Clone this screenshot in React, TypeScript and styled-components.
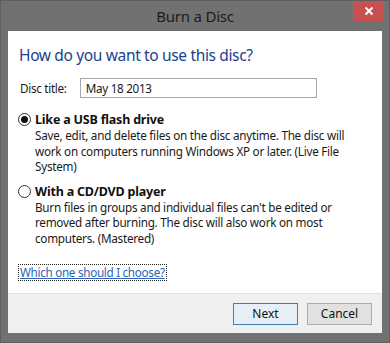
import React from "react";
import styled, { createGlobalStyle } from "styled-components";

const Global = createGlobalStyle`
  html, body { margin: 0; padding: 0; background: #6f6f6f; }
  #root { width: 390px; height: 343px; }
  * { box-sizing: border-box; }
`;

const Window = styled.div`
  width: 390px;
  height: 343px;
  background: #717171;
  border: 1px solid #5f5f5f;
  display: flex;
  flex-direction: column;
  padding: 0 7px 9px 7px;
  font-family: "Noto Sans", "Open Sans", sans-serif;
`;

const TitleBar = styled.div`
  height: 30px;
  display: grid;
  grid-template-columns: 1fr auto 1fr;
  align-items: start;
`;

const Title = styled.div`
  grid-column: 2;
  font-size: 15px;
  color: #1c1c1c;
  line-height: 30px;
  letter-spacing: -0.2px;
`;

const CloseButton = styled.div`
  grid-column: 3;
  justify-self: end;
  margin-right: -2px;
  width: 31px;
  height: 20px;
  background: #c75050;
  display: flex;
  align-items: center;
  justify-content: center;
`;

const Client = styled.div`
  flex: 1;
  background: #ffffff;
  display: flex;
  flex-direction: column;
`;

const Content = styled.div`
  flex: 1;
  padding: 13px 11px 0 11px;
  display: flex;
  flex-direction: column;
`;

const Heading = styled.div`
  font-size: 15.5px;
  color: #1b3f91;
  line-height: 22px;
  letter-spacing: -0.35px;
`;

const FieldRow = styled.div`
  display: flex;
  align-items: center;
  margin-top: 12px;
  padding-left: 1px;
  gap: 13px;
`;

const Label = styled.span`
  font-size: 11.7px;
  color: #1a1a1a;
  letter-spacing: -0.3px;
`;

const TextBox = styled.div`
  width: 237px;
  height: 20px;
  border: 1px solid #a9a9a9;
  font-size: 11.7px;
  color: #1a1a1a;
  padding-left: 5px;
  line-height: 18px;
  letter-spacing: -0.3px;
`;

const Option = styled.div<{ $first?: boolean }>`
  display: grid;
  grid-template-columns: 16px 322px;
  margin-top: ${(p) => (p.$first ? "13px" : "8px")};
`;

const Radio = styled.div<{ $checked?: boolean }>`
  width: 13px;
  height: 13px;
  border-radius: 50%;
  border: 1px solid #333;
  background: #fff;
  margin-top: 2px;
  margin-left: -1px;
  display: flex;
  align-items: center;
  justify-content: center;
  &::after {
    content: "";
    width: 7px;
    height: 7px;
    border-radius: 50%;
    background: ${(p) => (p.$checked ? "#111" : "transparent")};
  }
`;

const OptionTitle = styled.div`
  font-size: 12.5px;
  font-weight: 700;
  color: #111;
  line-height: 17px;
  letter-spacing: -0.2px;
`;

const OptionText = styled.div`
  grid-column: 2;
  font-size: 11.7px;
  color: #1a1a1a;
  line-height: 15.5px;
  letter-spacing: -0.25px;
`;

const Link = styled.a`
  align-self: flex-start;
  margin-top: 19px;
  font-size: 11.7px;
  color: #2a63b8;
  text-decoration: underline;
  outline: 1px dotted #222;
  line-height: 15px;
  padding: 0 1px;
  letter-spacing: -0.3px;
`;

const Footer = styled.div`
  height: 40px;
  background: #f0f0f0;
  border-top: 1px solid #dfdfdf;
  display: flex;
  justify-content: flex-end;
  align-items: center;
  gap: 9px;
  padding-right: 10px;
`;

const Button = styled.div<{ $default?: boolean }>`
  width: 65px;
  height: 22px;
  border: 1px solid ${(p) => (p.$default ? "#3c7fb1" : "#adadad")};
  background: ${(p) => (p.$default ? "#e8eef5" : "#e1e1e1")};
  font-size: 12px;
  color: #111;
  display: flex;
  align-items: center;
  justify-content: center;
`;

export default function App() {
  return (
    <>
      <Global />
      <Window>
        <TitleBar>
          <Title>Burn a Disc</Title>
          <CloseButton>
            <svg width="10" height="10" viewBox="0 0 10 10">
              <path d="M1.5 1.5 L8.5 8.5 M8.5 1.5 L1.5 8.5" stroke="#fff" strokeWidth="2" />
            </svg>
          </CloseButton>
        </TitleBar>
        <Client>
          <Content>
            <Heading>How do you want to use this disc?</Heading>
            <FieldRow>
              <Label>Disc title:</Label>
              <TextBox>May 18 2013</TextBox>
            </FieldRow>
            <Option $first>
              <Radio $checked />
              <OptionTitle>Like a USB flash drive</OptionTitle>
              <OptionText>
                Save, edit, and delete files on the disc anytime. The disc will work on computers running Windows XP or later. (Live File System)
              </OptionText>
            </Option>
            <Option>
              <Radio />
              <OptionTitle>With a CD/DVD player</OptionTitle>
              <OptionText>
                Burn files in groups and individual files can't be edited or removed after burning. The disc will also work on most computers. (Mastered)
              </OptionText>
            </Option>
            <Link>Which one should I choose?</Link>
          </Content>
          <Footer>
            <Button $default>Next</Button>
            <Button>Cancel</Button>
          </Footer>
        </Client>
      </Window>
    </>
  );
}
